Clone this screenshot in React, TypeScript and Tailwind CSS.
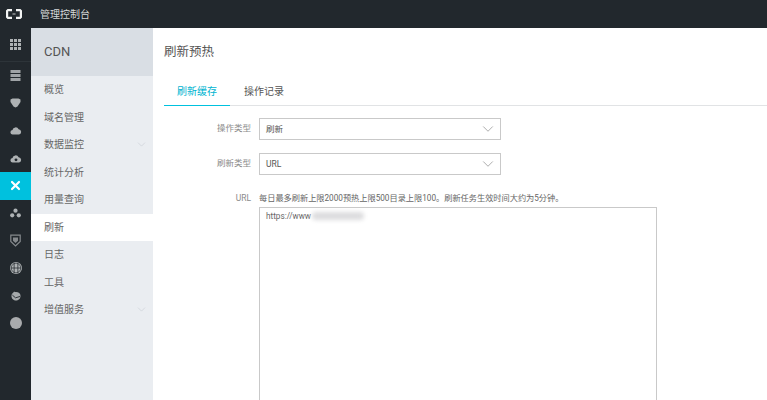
import React from 'react';
import { ChevronDown } from 'lucide-react';

const FONT = 'Roboto, "Noto Sans CJK SC", sans-serif';

const railIcons: { key: string; active?: boolean; node: React.ReactNode }[] = [
  {
    key: 'server',
    node: (
      <svg width="11" height="11" viewBox="0 0 11 11" fill="#9fa3a6">
        <rect x="0.500" y="0" width="10" height="3" />
        <rect x="0.500" y="4" width="10" height="3" />
        <rect x="0.500" y="8" width="10" height="3" />
      </svg>
    ),
  },
  {
    key: 'gem',
    node: (
      <svg width="11" height="10" viewBox="0 0 11 10" fill="#aeb2b4">
        <path d="M.5 1.500 2.500.5h6l2 1v2.500L7.500 8.500 5.500 9.500 3.500 8.500.5 4z" />
      </svg>
    ),
  },
  {
    key: 'cloud',
    node: (
      <svg width="12" height="9" viewBox="0 0 13 10" fill="#aeb2b4">
        <path d="M3 9.500a2.500 2.500 0 0 1-.4-5A3.600 3.600 0 0 1 9.400 3.600 3 3 0 0 1 10 9.500z" />
      </svg>
    ),
  },
  {
    key: 'cloud-up',
    node: (
      <svg width="12" height="9" viewBox="0 0 13 10">
        <path fill="#aeb2b4" d="M3 9.500a2.500 2.500 0 0 1-.4-5A3.600 3.600 0 0 1 9.400 3.600 3 3 0 0 1 10 9.500z" />
        <circle cx="6.500" cy="6.500" r="1.600" fill="#22282d" />
      </svg>
    ),
  },
  {
    key: 'cross',
    active: true,
    node: (
      <svg width="11" height="11" viewBox="0 0 11 11" stroke="#fff" strokeWidth="2.200" strokeLinecap="round">
        <path d="M2 2l7 7M9 2l-7 7" />
      </svg>
    ),
  },
  {
    key: 'nodes',
    node: (
      <svg width="11" height="10" viewBox="0 0 12 10" fill="#aeb2b4">
        <circle cx="6" cy="2.500" r="2.300" />
        <circle cx="2.400" cy="7.500" r="2.300" />
        <circle cx="9.600" cy="7.500" r="2.300" />
      </svg>
    ),
  },
  {
    key: 'shield',
    node: (
      <svg width="11" height="13" viewBox="0 0 11 13" fill="none" stroke="#85898c" strokeWidth="1.200">
        <path d="M.8 1.200h9.400v6.300L5.500 12 .8 7.500z" />
        <path d="M3 3.500h5v3.300L5.500 9 3 6.800z" fill="#85898c" stroke="none" />
      </svg>
    ),
  },
  {
    key: 'globe',
    node: (
      <svg width="12" height="12" viewBox="0 0 13 13" fill="#aeb2b4">
        <circle cx="6.500" cy="6.500" r="6.500" />
        <circle cx="6.500" cy="6.500" r="5.200" fill="none" stroke="#22282d" strokeWidth="0.700" />
        <path d="M4.500 1v11M8.500 1v11M1 6.500h11" stroke="#22282d" strokeWidth="0.800" />
      </svg>
    ),
  },
  {
    key: 'pot',
    node: (
      <svg width="12" height="10" viewBox="0 0 13 11">
        <path fill="#a5a9ab" d="M1.500 5.500a5 4.500 0 0 1 10 0c0 3-2.500 5-5 5s-5-2-5-5z" />
        <path d="M4 1 7 3.500" stroke="#a5a9ab" strokeWidth="1.500" />
        <path d="M2.500 4.500 6 7.500 11 6" stroke="#22282d" strokeWidth="1" fill="none" />
      </svg>
    ),
  },
  {
    key: 'dot',
    node: <div className="w-3 h-3 rounded-full bg-[#a9abad]" />,
  },
];

const menu = [
  { label: '概览' },
  { label: '域名管理' },
  { label: '数据监控', arrow: true },
  { label: '统计分析' },
  { label: '用量查询' },
  { label: '刷新', active: true },
  { label: '日志' },
  { label: '工具' },
  { label: '增值服务', arrow: true },
];

const Select: React.FC<{ label: string; value: string }> = ({ label, value }) => (
  <div className="flex items-center h-[22px]">
    <div className="w-[95px] pr-[8px] pb-[2px] text-right text-[8.500px] text-[#8a8a8a]">{label}</div>
    <div className="w-[242px] h-[22px] border border-[#c9c9c9] flex items-center justify-between pl-[6px] pr-[3px] text-[8.500px] text-[#555]">
      <span className="pt-[1px]">{value}</span>
      <ChevronDown size={18} strokeWidth={0.8} className="text-[#777]" />
    </div>
  </div>
);

const App: React.FC = () => {
  return (
    <div className="w-[767px] h-[400px] overflow-hidden flex flex-col bg-white" style={{ fontFamily: FONT }}>
      {/* Top bar */}
      <div className="h-[28px] shrink-0 flex items-center bg-[#22282d]">
        <div className="w-[31px] pl-[6px]">
          <svg width="16" height="10" viewBox="0 0 16 10" fill="none" stroke="#f2f3f3" strokeWidth="2.200" className="block">
            <path d="M6 1.100H2L1.100 2v6l.9.9h4M10 1.100h4l.9.9v6l-.9.9h-4" />
            <path d="M6.500 5h3" strokeWidth="0.800" />
          </svg>
        </div>
        <span className="ml-[9px] text-[10px] text-[#d6d9da]">管理控制台</span>
      </div>

      <div className="flex flex-1 min-h-0">
        {/* Icon rail */}
        <div className="w-[31px] shrink-0 bg-[#22282d] flex flex-col">
          <div className="h-[34px] shrink-0 flex items-center justify-center border-b border-[#2d3439]">
            <svg width="11" height="11" viewBox="0 0 11 11" fill="#aeb2b4">
              {[0, 4, 8].map((y) =>
                [0, 4, 8].map((x) => <rect key={`${x}-${y}`} x={x} y={y} width="3" height="3" />)
              )}
            </svg>
          </div>
          {railIcons.map((item) => (
            <div
              key={item.key}
              className={`h-[27.500px] shrink-0 flex items-center justify-center ${item.active ? 'bg-[#00c1de]' : ''}`}
            >
              {item.node}
            </div>
          ))}
        </div>

        {/* Product menu */}
        <div className="w-[122px] shrink-0 bg-[#eaedf1] flex flex-col">
          <div className="h-[48px] shrink-0 bg-[#d9dee4] flex items-center pl-[13px] text-[13px] text-[#555]">CDN</div>
          {menu.map((item) => (
            <div
              key={item.label}
              className={`h-[27.500px] shrink-0 flex items-center justify-between pl-[13px] pr-[5px] text-[10px] text-[#666] ${item.active ? 'bg-white' : ''}`}
            >
              <span>{item.label}</span>
              {item.arrow && <ChevronDown size={13} strokeWidth={1} className="text-[#c3c8ce]" />}
            </div>
          ))}
        </div>

        {/* Main */}
        <div className="flex-1 min-w-0 pl-[11px]">
          <div className="h-[48px] pt-[1px] flex items-center text-[12.500px] text-[#555]">刷新预热</div>
          <div className="h-[30px] flex border-b border-[#e1e3e5]">
            <div className="w-[66px] h-[30px] pt-[1px] flex items-center justify-center border-b border-[#00c1de] text-[10px] text-[#00b4d0]">
              刷新缓存
            </div>
            <div className="ml-[14px] h-[29px] pt-[1px] flex items-center text-[10px] text-[#555]">操作记录</div>
          </div>
          <div className="mt-[12px] flex flex-col gap-[13px]">
            <Select label="操作类型" value="刷新" />
            <Select label="刷新类型" value="URL" />
          </div>
          <div className="mt-[17px] flex">
            <div className="w-[95px] pr-[8px] text-right text-[8.500px] leading-[13px] text-[#8a8a8a]">URL</div>
            <div>
              <div className="h-[15px] text-[8.200px] leading-[13px] text-[#666] whitespace-nowrap">
                每日最多刷新上限2000预热上限500目录上限100。刷新任务生效时间大约为5分钟。
              </div>
              <div className="w-[398px] h-[220px] border border-[#c9c9c9] px-[6px] py-[2px] flex items-start text-[8.200px] leading-[13px] text-[#666]">
                <span>https://www</span>
                <span className="ml-[1px] mt-[2px] w-[52px] h-[8px] rounded-sm bg-[#dcdcde] blur-[2px]" />
              </div>
            </div>
          </div>
        </div>
      </div>
    </div>
  );
};

export default App;
